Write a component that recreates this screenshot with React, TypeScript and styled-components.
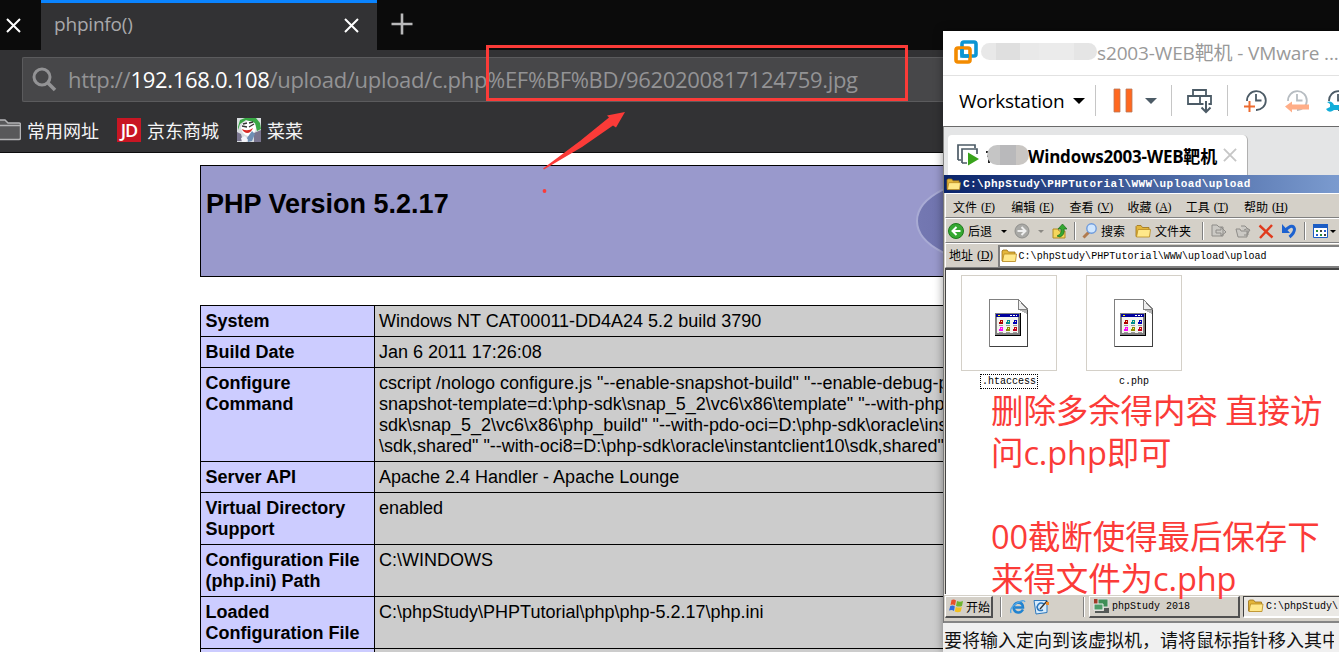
import React from "react";
import styled, { createGlobalStyle } from "styled-components";

const UI = `"Open Sans", "Noto Sans CJK SC", sans-serif`;
const CJK = `"Noto Sans CJK SC", sans-serif`;
const GUEST = `"Liberation Mono", "Noto Sans CJK SC", monospace`;

const Global = createGlobalStyle`
  * { box-sizing: border-box; }
  body { margin: 0; background: #fff; overflow: hidden; }
`;

const Text = styled.span<{ $size: number; $ls?: number; $color?: string; $font?: string; $weight?: number }>`
  font-family: ${(p) => p.$font ?? UI};
  font-size: ${(p) => p.$size}px;
  letter-spacing: ${(p) => p.$ls ?? 0}px;
  color: ${(p) => p.$color ?? "inherit"};
  font-weight: ${(p) => p.$weight ?? 400};
  white-space: pre;
  flex: none;
`;

const Gap = styled.i<{ $w: number }>`
  flex: none;
  width: ${(p) => p.$w}px;
`;

const Desktop = styled.main`
  position: relative;
  width: 1339px;
  height: 652px;
  overflow: hidden;
  background: #fff;
`;

/* Browser */
const Chrome = styled.header`
  height: 153px;
  background: #323234;
  border-bottom: 1px solid #0c0c0d;
`;
const TabBar = styled.div`
  display: flex;
  height: 50px;
  background: #0b0b0b;
`;
const OldTab = styled.div`
  width: 41px;
  padding: 18px 0 0 6px;
`;
const ActiveTab = styled.div`
  display: flex;
  justify-content: space-between;
  width: 336px;
  height: 50px;
  padding: 0 18px 0 13px;
  border-top: 3px solid #0a84ff;
  background: #323234;
  line-height: 43px;
  svg { margin-top: 15px; }
`;
const NewTab = styled.div`
  padding: 13px 0 0 14px;
`;
const UrlBar = styled.div`
  display: flex;
  align-items: center;
  height: 45px;
  margin: 7px 0 0 22px;
  padding-left: 9px;
  border: 1px solid #5b5b5d;
  border-right: 0;
  border-radius: 2px 0 0 2px;
  background: #474749;
  color: #939395;
  line-height: 43px;
  svg { margin-right: 11px; flex: none; }
  b { font-weight: 400; color: #fff; }
`;
const Bookmarks = styled.nav`
  display: flex;
  height: 50px;
  padding-top: 6px;
  align-items: center;
  color: #f5f5f6;
`;
const Bookmark = styled.div<{ $after: number }>`
  display: flex;
  align-items: center;
  gap: 6px;
  margin-right: ${(p) => p.$after}px;
`;
const JdLogo = styled.span`
  display: flex;
  align-items: center;
  justify-content: center;
  width: 24px;
  height: 24px;
  background: #c81623;
  color: #fff;
  font: 600 18px/25px "Open Sans", sans-serif;
  letter-spacing: -1px;
`;

/* phpinfo page */
const Page = styled.section`
  padding: 12px 0 0 200px;
  font-family: "Liberation Sans", sans-serif;
  color: #000;
`;
const Banner = styled.div`
  display: flex;
  justify-content: space-between;
  width: 900px;
  height: 112px;
  border: 1px solid #000;
  background: #9999cc;
`;
const Heading = styled.h1`
  margin: 22px 0 0 5px;
  font-size: 27px;
  line-height: 32px;
`;
const PhpLogo = styled.svg`
  display: block;
  margin: 10px 0 0;
`;
const InfoTable = styled.table`
  width: 900px;
  margin-top: 28px;
  border-collapse: collapse;
  table-layout: fixed;
  font-size: 18px;
  line-height: 21px;
`;
const Cell = styled.td<{ $head?: boolean }>`
  width: ${(p) => (p.$head ? "174px" : "auto")};
  padding: 5px 4px 4px ${(p) => (p.$head ? 4.5 : 4)}px;
  border: 1px solid #000;
  background: ${(p) => (p.$head ? "#ccccff" : "#cccccc")};
  font-weight: ${(p) => (p.$head ? 700 : 400)};
  vertical-align: top;
  white-space: pre;
`;

/* VMware window */
const VmWindow = styled.section`
  position: absolute;
  left: 943px;
  top: 31px;
  width: 396px;
  height: 621px;
  overflow: hidden;
  background: #fff;
  box-shadow: 0 0 9px rgba(0, 0, 0, 0.4);
`;
const VmTitle = styled.div`
  display: flex;
  align-items: center;
  height: 45px;
  padding: 0 0 3px 11px;
  border-bottom: 1px solid #e2e2e2;
`;
const Blot = styled.i<{ $w: number; $h: number; $bg: string; $m: string }>`
  position: relative;
  flex: none;
  width: ${(p) => p.$w}px;
  height: ${(p) => p.$h}px;
  margin: ${(p) => p.$m};
  border-radius: 11px;
  background: ${(p) => p.$bg};
`;
const VmTools = styled.div`
  display: flex;
  align-items: center;
  height: 50px;
  padding: 0 0 1px 16px;
  svg { flex: none; }
`;
const Rule = styled.i<{ $m: string }>`
  width: 1px;
  height: 31px;
  flex: none;
  margin: ${(p) => p.$m};
  background: #c6c6c6;
`;
const Caret = styled.i<{ $c: string; $s?: number; $m?: string }>`
  flex: none;
  border: ${(p) => p.$s ?? 6}px solid transparent;
  border-top-color: ${(p) => p.$c};
  border-bottom: 0;
  margin: ${(p) => p.$m ?? 0};
`;
const VmTabs = styled.div`
  height: 49px;
  padding: 8px 0 0 4px;
  border-top: 1px solid #6a6a6a;
  border-left: 1px solid #858585;
  background: #e4e5e6;
`;
const VmTab = styled.div`
  display: flex;
  align-items: center;
  width: 300px;
  height: 40px;
  padding-left: 8px;
  border-right: 1px solid #b0b0b0;
  border-radius: 4px 5px 0 0;
  background: #fff;
  svg { flex: none; }
`;
const Status = styled.footer`
  height: 29px;
  padding-left: 1px;
  background: #f0f0f0;
  line-height: 32px;
`;
const StatusClip = styled.div`
  width: 390px;
  overflow: hidden;
`;

/* Guest desktop */
const Guest = styled.div`
  height: 448px;
  border-left: 1px solid #777;
  background: #d4d0c8;
  color: #000;
`;
const GuestTitle = styled.div`
  display: flex;
  align-items: center;
  height: 18px;
  padding-left: 2px;
  gap: 2px;
  background: linear-gradient(90deg, #0a246a, #7b9bcf);
  color: #fff;
`;
const GuestBar = styled.div<{ $pad?: number; $top?: number }>`
  display: flex;
  align-items: center;
  height: 25px;
  margin-left: 1px;
  padding-left: ${(p) => p.$pad ?? 0}px;
  padding-top: ${(p) => p.$top ?? 0}px;
  border-top: 1px solid #fff;
  border-left: 1px solid #fff;
  border-bottom: 1px solid #808080;
  svg { flex: none; }
`;
const Label = styled.span<{ $w?: string }>`
  display: flex;
  flex: none;
  gap: 4px;
  width: ${(p) => p.$w ?? "auto"};
  font: 12px/20px ${CJK};
`;
const Key = styled.span`
  font: 12px/21px "Liberation Serif", serif;
  letter-spacing: -0.4px;
`;
const Groove = styled.i<{ $m: string; $h?: number }>`
  width: 2px;
  height: ${(p) => p.$h ?? 18}px;
  flex: none;
  margin: ${(p) => p.$m};
  background: #808080;
  border-right: 1px solid #fff;
`;
const Address = styled.div`
  display: flex;
  align-items: center;
  gap: 2px;
  flex: 1;
  min-width: 0;
  height: 22px;
  margin-left: 5px;
  padding-left: 1px;
  border: solid #808080;
  border-width: 2px 0 1px 2px;
  background: #fff;
`;
const Files = styled.div`
  display: flex;
  gap: 29px;
  height: 326px;
  margin-left: 1px;
  padding: 5px 0 0 15px;
  border-top: 2px solid #444;
  border-left: 1px solid #444;
  background: #fff;
`;
const FileItem = styled.div`
  display: flex;
  flex-direction: column;
  align-items: center;
  width: 96px;
`;
const Thumb = styled.div`
  display: flex;
  justify-content: center;
  width: 96px;
  height: 96px;
  padding-top: 23px;
  border: 1px solid #d4d0c8;
`;
const FileName = styled.div<{ $focus?: boolean }>`
  height: 15px;
  margin-top: 3px;
  padding: 0 1px;
  border: 1px ${(p) => (p.$focus ? "dotted #000" : "solid transparent")};
  font: 10px/14px ${GUEST};
`;
const Taskbar = styled.div`
  display: flex;
  align-items: center;
  height: 29px;
  padding-bottom: 3px;
  border-top: 1px solid #fff;
  border-bottom: 2px solid #858585;
  svg { flex: none; }
`;
const TaskButton = styled.div<{ $w: number; $down?: boolean }>`
  display: flex;
  align-items: center;
  gap: 2px;
  flex: none;
  width: ${(p) => p.$w}px;
  height: 22px;
  padding-left: 3px;
  overflow: hidden;
  border: solid;
  border-width: 1px 2px 2px 1px;
  border-color: ${(p) => (p.$down ? "#404040 #fff #fff #404040" : "#fff #505050 #505050 #fff")};
  background: ${(p) => (p.$down ? "#ebe9e5" : "#d4d0c8")};
`;

/* Annotations over the desktop */
const Frame = styled.div`
  position: absolute;
  left: 486px;
  top: 45px;
  width: 422px;
  height: 56px;
  border: 3px solid #fb3b38;
`;
const Arrow = styled.svg`
  position: absolute;
  left: 540px;
  top: 108px;
`;
const Note = styled.p`
  position: absolute;
  left: 991px;
  top: 390px;
  margin: 0;
  color: #fb3b38;
  font: 32.5px/42px "Open Sans", ${CJK};
  letter-spacing: -0.1px;
  word-spacing: -1px;
  white-space: pre;
`;

const Cross = ({ s = 15, c = "#fff", w = 2 }) => (
  <svg width={s} height={s} viewBox="0 0 15 15" fill="none" stroke={c} strokeWidth={w}>
    <path d="M1 1l13 13M14 1L1 14" />
  </svg>
);

const Folder = ({ w = 16, h = 14 }) => (
  <svg width={w} height={h} viewBox="0 0 16 14">
    <path d="M1 12V2l1-1h4l1.500 2H14v9z" fill="#e3b63b" stroke="#9a7016" strokeWidth=".8" />
    <path d="M1.500 12.500L3 5h12.500l-1 7.500z" fill="#ffe88a" stroke="#b98a20" strokeWidth=".8" />
  </svg>
);

const Clock = ({ c = "#4c5b66" }) => (
  <g fill="none" stroke={c} strokeWidth="1.800">
    <path d="M3 13A9.400 9.400 0 1 1 12 22" />
    <path d="M12 6v6.500h5.500" />
  </g>
);

const FileIcon = () => (
  <svg width="40" height="48" viewBox="0 0 40 48" shapeRendering="crispEdges">
    <path d="M.500.500h29l9 9v38h-38z" fill="#fff" stroke="#808080" />
    <path d="M38.500 10v37.500H1" fill="none" stroke="#404040" />
    <path d="M29.500.500v10h9z" fill="#eee" stroke="#808080" />
    <path d="M30 11h8v4z" fill="#b5b5b5" />
    <path d="M6 14h26v23H6z" fill="#000" />
    <path d="M6 14h25v22H6z" fill="#808080" />
    <path d="M8 18h21v16H8z" fill="#f4f4ee" />
    <path d="M7 15h23v3H7z" fill="#00009c" />
    <path d="M9 16h2v1H9z" fill="#ff0" />
    <path d="M21 16h2v1h-2zM24 16h2v1h-2zM27 16h1v1h-1z" fill="#fff" />
    {["#b00000", "#008c8c", "#0000b8", "#f0f", "#8c8c00", "#c00020"].map((c, i) => {
      const x = 10 + (i % 3) * 7;
      const y = 21 + Math.floor(i / 3) * 7;
      return (
        <g key={i}>
          <path d={`M${x + 1} ${y}h3v4h-3zM${x} ${y + 2}h2v2h-2z`} fill={c} />
          <path d={`M${x + 2} ${y + 1}h1v1h-1z`} fill="#fff27a" />
          <path d={`M${x} ${y + 5}h4v1h-4z`} fill="#999" />
        </g>
      );
    })}
  </svg>
);

const rows: [string, string][] = [
  ["System", "Windows NT CAT00011-DD4A24 5.2 build 3790"],
  ["Build Date", "Jan 6 2011 17:26:08"],
  [
    "Configure\nCommand",
    'cscript /nologo configure.js "--enable-snapshot-build" "--enable-debug-pack"\nsnapshot-template=d:\\php-sdk\\snap_5_2\\vc6\\x86\\template" "--with-php-build\nsdk\\snap_5_2\\vc6\\x86\\php_build" "--with-pdo-oci=D:\\php-sdk\\oracle\\instant\n\\sdk,shared" "--with-oci8=D:\\php-sdk\\oracle\\instantclient10\\sdk,shared"',
  ],
  ["Server API", "Apache 2.4 Handler - Apache Lounge"],
  ["Virtual Directory\nSupport", "enabled"],
  ["Configuration File\n(php.ini) Path", "C:\\WINDOWS"],
  ["Loaded\nConfiguration File", "C:\\phpStudy\\PHPTutorial\\php\\php-5.2.17\\php.ini"],
  ["", ""],
];

const menus: [string, string][] = [["文件", "F"], ["编辑", "E"], ["查看", "V"], ["收藏", "A"], ["工具", "T"], ["帮助", "H"]];

const Browser = () => (
  <>
    <Chrome>
      <TabBar>
        <OldTab><Cross /></OldTab>
        <ActiveTab>
          <Text $size={19} $ls={-0.2} $color="#a9a9ab">phpinfo()</Text>
          <Cross />
        </ActiveTab>
        <NewTab>
          <svg width="22" height="22" stroke="#b9b9ba" strokeWidth="2.600"><path d="M11 .500v21M.500 11h21" /></svg>
        </NewTab>
      </TabBar>
      <UrlBar>
        <svg width="25" height="25" fill="none" stroke="#939395" strokeWidth="3">
          <circle cx="10" cy="10" r="8" />
          <path d="M15.500 15.500L23 23" strokeWidth="3.600" />
        </svg>
        <Text $size={22} $ls={-0.31}>http://<b>192.168.0.108</b>/upload/upload/c.php%EF%BF%BD/9620200817124759.jpg</Text>
      </UrlBar>
      <Bookmarks>
        <Bookmark $after={18}>
          <svg width="21" height="22" fill="#58585a" stroke="#b4b4b6" strokeWidth="1.500">
            <path d="M-3 1h8l3 3h11q1.500 0 1.500 1.500V19q0 1.500-1.500 1.500H-3M-3 6.500h23" />
          </svg>
          <Text $size={18} $font={CJK}>常用网址</Text>
        </Bookmark>
        <Bookmark $after={18}>
          <JdLogo>JD</JdLogo>
          <Text $size={18} $font={CJK}>京东商城</Text>
        </Bookmark>
        <Bookmark $after={0}>
          <svg width="24" height="24">
            <path d="M0 0h24v24H0z" fill="#d9dde0" />
            <path d="M1 9L3 2l5-2h11l4 5 1 6-4 2-2-8-9-3-6 4-2 6z" fill="#39a845" />
            <path d="M0 14l4 2 2 7H0zM17 15l7-3v12h-7z" fill="#79758f" />
            <path d="M4 9q2-6 8-6t7 7q-1 7-8 8-6-1-7-9z" fill="#fff" />
            <path d="M5 8l5 1M12 9l5-3M6 6l4-1M12 5l4-1" stroke="#333" strokeWidth="1.300" />
            <path d="M5 11q6 3 11-1-2 5-6 5-4-1-5-4z" fill="#d82b25" />
            <path d="M10 20l5-7 3 3-3 7-4 1z" fill="#6f8fb5" />
            <path d="M4 20l4-2 3 4-2 2H5z" fill="#f5f5fa" />
          </svg>
          <Text $size={18} $font={CJK}>菜菜</Text>
        </Bookmark>
      </Bookmarks>
    </Chrome>
    <Page>
      <Banner>
        <Heading>PHP Version 5.2.17</Heading>
        <PhpLogo width="183" height="92">
          <defs>
            <linearGradient id="php" x1="0" y1="0" x2="1" y2="0">
              <stop offset="0" stopColor="#7478b2" />
              <stop offset="1" stopColor="#5a5c98" />
            </linearGradient>
          </defs>
          <ellipse cx="88" cy="45" rx="87" ry="44" fill="url(#php)" stroke="#a9abd4" strokeWidth="2" />
        </PhpLogo>
      </Banner>
      <InfoTable>
        <tbody>
          {rows.map(([k, v]) => (
            <tr key={k}><Cell $head>{k}</Cell><Cell>{v}</Cell></tr>
          ))}
        </tbody>
      </InfoTable>
    </Page>
  </>
);

const GuestScreen = () => (
  <Guest>
    <GuestTitle>
      <Folder w={15} h={13} />
      <Text $size={11} $ls={0.42} $weight={700} $font={GUEST}>C:\phpStudy\PHPTutorial\WWW\upload\upload</Text>
    </GuestTitle>
    <GuestBar $pad={7} $top={3}>
      {menus.map(([m, k]) => (
        <Label key={k} $w="58.2px">{m}<Key>(<u>{k}</u>)</Key></Label>
      ))}
    </GuestBar>
    <GuestBar $pad={2} $top={1}>
      <svg width="16" height="16">
        <circle cx="8" cy="8" r="7.500" fill="#35a832" stroke="#1d7a1c" />
        <path d="M12.500 8H5M8.500 4L4.500 8l4 4" fill="none" stroke="#fff" strokeWidth="2" />
      </svg>
      <Gap $w={4} />
      <Label>后退</Label>
      <Caret $c="#000" $s={3} $m="0 7px 0 9px" />
      <svg width="16" height="16">
        <circle cx="8" cy="8" r="7" fill="#a9a9a6" stroke="#8f8f8c" />
        <path d="M3.500 8H11M7.500 4l4 4-4 4" fill="none" stroke="#eee" strokeWidth="2" />
      </svg>
      <Caret $c="#8b8984" $s={3} $m="0 8px 0 8px" />
      <svg width="15" height="17">
        <path d="M1 6h5l1 2h6v7H1z" fill="#f5d65b" stroke="#b08a24" />
        <path d="M5 13q5-2 4-7H6l4.500-5L15 6h-3q1 6-4 8z" fill="#35a832" stroke="#1b6b1a" strokeWidth=".7" />
      </svg>
      <Groove $m="0 6px 0 7px" />
      <svg width="15" height="16">
        <path d="M1.500 14.500L7 9" stroke="#b17b4f" strokeWidth="3" />
        <circle cx="9.500" cy="5.500" r="4.700" fill="#cfe6ff" stroke="#6e9bdc" strokeWidth="1.400" />
      </svg>
      <Gap $w={4} />
      <Label>搜索</Label>
      <Gap $w={10} />
      <Folder w={16} h={15} />
      <Gap $w={4} />
      <Label>文件夹</Label>
      <Groove $m="0 7px 0 11px" />
      <svg width="16" height="16" fill="#cbc9c4" stroke="#8e8c88">
        <path d="M1 2h5l2 2h4v9H1zM5 7h5V4l5 5-5 4v-3H5z" />
      </svg>
      <Gap $w={8} />
      <svg width="16" height="16" fill="#cbc9c4" stroke="#8e8c88">
        <path d="M1 6h4l1 2h6v6H3zM6 3h4l3 3v6H9M9 7q4-3 6 0l-3 4" />
      </svg>
      <Gap $w={7} />
      <svg width="16" height="15" stroke="#e03a1c" strokeWidth="2.400"><path d="M1.500 1.500l13 12M14 1L2 14" /></svg>
      <Gap $w={7} />
      <svg width="16" height="16">
        <path d="M4.500 7Q12 0 13.500 6q0 4-5 8" fill="none" stroke="#1d62d0" strokeWidth="3" />
        <path d="M1 1v9h8z" fill="#1d62d0" />
      </svg>
      <Groove $m="0 7px 0 7px" />
      <svg width="15" height="14">
        <path d="M.500.500h14v13H.500z" fill="#fff" stroke="#1c5dc4" />
        <path d="M0 0h15v4H0z" fill="#1c5dc4" />
        <path d="M3 6h2v2H3zM7 10h2v2H7z" fill="#2a8c3a" />
        <path d="M7 6h2v2H7zM11 10h2v2h-2z" fill="#444" />
        <path d="M11 6h2v2h-2zM3 10h2v2H3z" fill="#2460d0" />
      </svg>
      <Caret $c="#000" $s={3} $m="0 0 0 2px" />
    </GuestBar>
    <GuestBar $pad={3}>
      <Label>地址<Key>(<u>D</u>)</Key></Label>
      <Address>
        <Folder w={16} h={14} />
        <Text $size={10} $ls={0.05} $font={GUEST}>C:\phpStudy\PHPTutorial\WWW\upload\upload</Text>
      </Address>
    </GuestBar>
    <Files>
      <FileItem><Thumb><FileIcon /></Thumb><FileName $focus>.htaccess</FileName></FileItem>
      <FileItem><Thumb><FileIcon /></Thumb><FileName>c.php</FileName></FileItem>
    </Files>
    <Taskbar>
      <Gap $w={1} />
      <TaskButton $w={48}>
        <svg width="15" height="14">
          <path d="M2.500 1Q5 0 7 1.500L6 6.500Q4 5 1.500 6z" fill="#e8502a" />
          <path d="M8 2q3 1.500 6 0l-1 5q-3 1-6 0z" fill="#6eb52f" />
          <path d="M1.300 7q3-1 4.500.500L5 12Q3 10.500 0 11.500z" fill="#2f6ddc" />
          <path d="M6.800 8q3 1 6 0l-1 4.500q-3 1.500-6 0z" fill="#f3c01f" />
        </svg>
        <Text $size={12} $font={CJK}>开始</Text>
      </TaskButton>
      <Groove $m="0 8px 0 7px" $h={20} />
      <svg width="16" height="16" fill="none">
        <path d="M13 10.500Q11 14 8 13.500 4 13 3.500 8.500 4 4 8.500 3.500 13 4 13 8.500H5" stroke="#2183d0" strokeWidth="2.500" />
        <path d="M1 14Q-1 9 7 4q7-4 8-1" stroke="#53a8e6" strokeWidth="1.300" />
      </svg>
      <Gap $w={7} />
      <svg width="16" height="16">
        <path d="M1 1.500h13v12L3 15z" fill="#d9ecfb" stroke="#2d78bd" />
        <path d="M11 5Q6 2 4 8q1 5 6 3" fill="none" stroke="#2d78bd" strokeWidth="1.600" />
        <path d="M7 10l7-8" stroke="#333" strokeWidth="1.400" />
        <path d="M13 3h3v3h-3z" fill="#ee8a28" />
      </svg>
      <Groove $m="0 4px 0 34px" $h={20} />
      <TaskButton $w={151}>
        <svg width="17" height="16">
          <path d="M1 1h6v5H1z" fill="#a23b27" />
          <path d="M5 1h10v8H5z" fill="#3f8f57" stroke="#ddd" />
          <path d="M1 6h9v6H1z" fill="#4e9d68" stroke="#eee" />
          <path d="M2 13h10v2H2zM11 10h5v5h-5z" fill="#555a58" />
        </svg>
        <Text $size={10} $font={GUEST}>phpStudy 2018</Text>
      </TaskButton>
      <Gap $w={3} />
      <TaskButton $w={152} $down>
        <Folder w={17} h={14} />
        <Text $size={10} $font={GUEST}>C:\phpStudy\</Text>
      </TaskButton>
    </Taskbar>
  </Guest>
);

const Vm = () => (
  <VmWindow>
    <VmTitle>
      <svg width="24" height="24" fill="none" strokeWidth="3.600">
        <rect x="8" y="2" width="14" height="14" rx="2" stroke="#0c95d3" />
        <rect x="2" y="8" width="14" height="14" rx="2" stroke="#f38b00" />
        <path d="M8 9v7h7" stroke="#0c95d3" />
      </svg>
      <Blot $w={116} $h={17} $m="0 0 0 3px" $bg="linear-gradient(90deg,#e8e8e8 0 13%,#dfdfdf 13% 34%,#e9e9e9 34% 50%,#ebebeb 50% 80%,#e5e5e5 80%)" />
      <Text $size={19} $ls={-0.14} $color="#999">s2003-WEB靶机 - VMware ...</Text>
    </VmTitle>
    <VmTools>
      <Text $size={19} $ls={-0.2} $color="#000">Workstation</Text>
      <Caret $c="#000" $m="0 0 0 8px" />
      <Rule $m="0 17px 0 10px" />
      <svg width="20" height="26"><path d="M1 1h6v23H1zM13 1h6v23h-6z" fill="#ff681f" stroke="#b9795a" strokeWidth=".8" /></svg>
      <Caret $c="#4c5b66" $m="0 0 0 12px" />
      <Rule $m="0 15px 0 14px" />
      <svg width="26" height="26" fill="none" stroke="#4c5b66" strokeWidth="1.800">
        <path d="M6 8V2h13v6M1 8h23v8H1zM13 8v8" />
        <path d="M19 12v12M14.500 19.500L19 24l4.500-4.500" stroke="#fff" strokeWidth="5" />
        <path d="M19 13v11M14.500 19.500L19 24l4.500-4.500" strokeWidth="2" />
      </svg>
      <Rule $m="0 16px 0 14px" />
      <svg width="24" height="26"><Clock /><path d="M5.500 13v11M0 18.500h11" stroke="#ed6b30" strokeWidth="2" /></svg>
      <Gap $w={17} />
      <svg width="24" height="26"><Clock c="#b7bdc2" /><path d="M0 18.500l7-5v3h17v5H7v3z" fill="#ffae88" /></svg>
      <Gap $w={17} />
      <svg width="24" height="26"><Clock /><path d="M1 14l3 2v3l-4 2q3 5 8 1h8v-5H8q-2-5-7-3z" fill="#12aeda" /></svg>
    </VmTools>
    <VmTabs>
      <VmTab>
        <svg width="24" height="24" fill="none" stroke="#4c5b66" strokeWidth="1.700">
          <path d="M2 17V2h17v3M2 17h3M6 20V6h15v5M6 20h5" />
          <path d="M12 9.500l11 6.500-11 6.500z" fill="#38a31b" stroke="none" />
        </svg>
        <Gap $w={6} />
        <svg width="4" height="18" fill="#222"><path d="M0 5h2v2H0zM1 9h2v2H1zM2 13h2v4H2z" /></svg>
        <Blot $w={42} $h={20} $m="-1px -1px 0 -3px" $bg="linear-gradient(90deg,#c5c5c5 0 30%,#b9b9bb 30% 70%,#c9c6c3 70%)" />
        <Text $size={17} $ls={-0.23} $weight={700} $color="#000">Windows2003-WEB靶机</Text>
        <Gap $w={6} />
        <Cross s={14} c="#c6c6c6" />
      </VmTab>
    </VmTabs>
    <GuestScreen />
    <Status>
      <StatusClip><Text $size={18} $font={CJK} $color="#111">要将输入定向到该虚拟机，请将鼠标指针移入其中</Text></StatusClip>
    </Status>
  </VmWindow>
);

export default function App() {
  return (
    <Desktop>
      <Global />
      <Browser />
      <Vm />
      <Frame />
      <Arrow width="90" height="90" fill="#fb3b38">
        <path d="M3 60.500L40 33 69 9.500 67 7.500 85 4 76 19.500 73 17.500 42 39 4 61.500z" />
        <circle cx="4.500" cy="83" r="1.900" />
      </Arrow>
      <Note>{"删除多余得内容 直接访\n问c.php即可\n\n00截断使得最后保存下\n来得文件为c.php"}</Note>
    </Desktop>
  );
}
